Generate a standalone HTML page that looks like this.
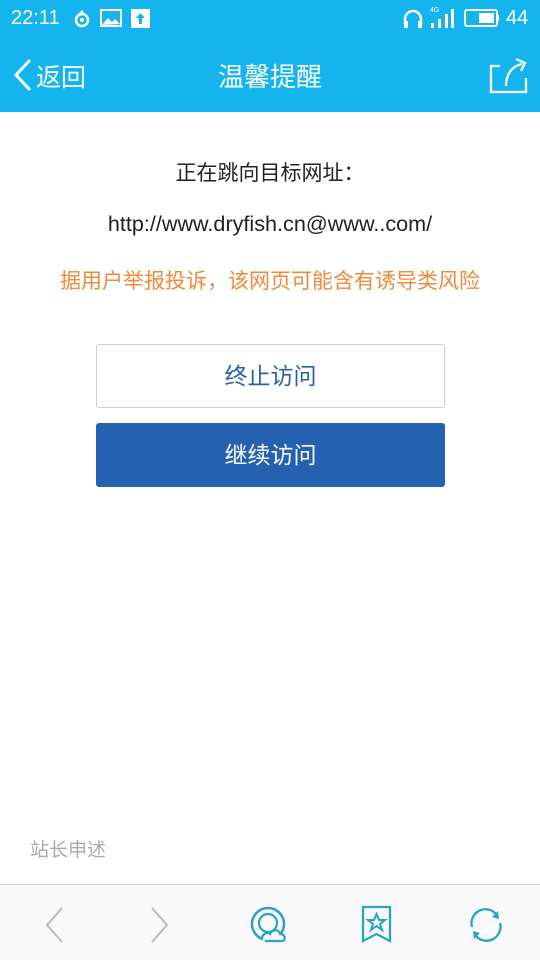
<!DOCTYPE html>
<html><head><meta charset="utf-8"><style>
*{margin:0;padding:0;box-sizing:border-box}
body{width:540px;height:960px;overflow:hidden;background:#fff;font-family:"Liberation Sans","Noto Sans CJK SC",sans-serif;position:relative}
.top{position:absolute;left:0;top:0;width:540px;height:112px;background:#14b4ee}
.abs{position:absolute}
.w{color:#fff}
.bottom{position:absolute;left:0;top:884px;width:540px;height:76px;background:#f9f9f9;border-top:1px solid #d0d0d0}
</style></head><body>
<div class="top">
 <div class="abs w" style="left:11px;top:7px;font-size:20px">22:11</div>
 <svg class="abs" style="left:72px;top:9px" width="20" height="20" viewBox="0 0 20 20"><circle cx="10" cy="11" r="6" fill="none" stroke="#fff" stroke-width="2.5"/><circle cx="10" cy="11" r="2" fill="#fff"/><path d="M6 7 L11 2" stroke="#fff" stroke-width="2.5"/></svg>
 <svg class="abs" style="left:100px;top:9px" width="22" height="18" viewBox="0 0 22 18"><rect x="1" y="1" width="20" height="16" fill="none" stroke="#fff" stroke-width="2"/><path d="M2 16 L8 9 L12 13 L15 10 L20 15 Z" fill="#fff"/></svg>
 <svg class="abs" style="left:131px;top:9px" width="19" height="19"><rect width="19" height="19" fill="#fff"/><path d="M9.5 4 L5 9 H8 V15 H11 V9 H14 Z" fill="#14b4ee"/></svg>
 <svg class="abs" style="left:402px;top:8px" width="22" height="22" viewBox="0 0 22 22"><path d="M3 16 V11 A8 8 0 0 1 19 11 V16" fill="none" stroke="#fff" stroke-width="2.5"/><rect x="2" y="13" width="4" height="7" fill="#fff"/><rect x="16" y="13" width="4" height="7" fill="#fff"/></svg>
 <div class="abs w" style="left:430px;top:7px;font-size:7px">4G</div>
 <svg class="abs" style="left:430px;top:9px" width="26" height="20"><rect x="1" y="14" width="3" height="5" fill="#fff"/><rect x="8" y="10" width="3" height="9" fill="#fff"/><rect x="15" y="5" width="3" height="14" fill="#fff"/><rect x="21" y="0" width="3" height="19" fill="#fff"/></svg>
 <svg class="abs" style="left:464px;top:9px" width="36" height="19"><rect x="1" y="1" width="32" height="16" rx="2" fill="none" stroke="#fff" stroke-width="2"/><rect x="15" y="4" width="15" height="10" fill="#fff"/><rect x="33" y="6" width="2" height="6" fill="#fff"/></svg>
 <div class="abs w" style="left:506px;top:7px;font-size:20px">44</div>
 <svg class="abs" style="left:12px;top:58px" width="22" height="34"><path d="M18 2 L4 17 L18 32" fill="none" stroke="#fff" stroke-width="3"/></svg>
 <div class="abs w" style="left:36px;top:58px;font-size:25px">返回</div>
 <div class="abs w" style="left:0;width:540px;text-align:center;top:57px;font-size:26px">温馨提醒</div>
 <svg class="abs" style="left:488px;top:56px" width="42" height="38"><path d="M12 10 H3 V36 H38 V22" fill="none" stroke="#fff" stroke-width="2.3"/><path d="M18 30 C18 18 24 10 34 8" fill="none" stroke="#fff" stroke-width="2.3"/><path d="M28 3 L37 7 L33 15" fill="none" stroke="#fff" stroke-width="2.3"/></svg>
</div>
<div class="abs" style="left:0;width:540px;text-align:center;top:157px;font-size:21px;color:#222">正在跳向目标网址：</div>
<div class="abs" style="left:0;width:540px;text-align:center;top:211px;font-size:21.6px;color:#222">http://www.dryfish.cn@www..com/</div>
<div class="abs" style="left:0;width:540px;text-align:center;top:265px;font-size:21px;color:#ef8a3c">据用户举报投诉，该网页可能含有诱导类风险</div>
<div class="abs" style="left:96px;top:344px;width:349px;height:64px;border:1px solid #ccc;border-radius:3px;text-align:center;line-height:62px;font-size:23px;color:#2a5fa6">终止访问</div>
<div class="abs" style="left:96px;top:423px;width:349px;height:64px;background:#2461b0;border-radius:3px;text-align:center;line-height:64px;font-size:23px;color:#fff">继续访问</div>
<div class="abs" style="left:30px;top:835px;font-size:19px;color:#aaa">站长申述</div>
<div class="bottom">
 <svg class="abs" style="left:42px;top:20px" width="24" height="40"><path d="M20 3 L5 20 L20 37" fill="none" stroke="#bbb" stroke-width="2"/></svg>
 <svg class="abs" style="left:148px;top:20px" width="24" height="40"><path d="M4 3 L19 20 L4 37" fill="none" stroke="#bbb" stroke-width="2"/></svg>
 <svg class="abs" style="left:248px;top:18px" width="44" height="44"><circle cx="20" cy="21" r="16" fill="none" stroke="#2aa3c0" stroke-width="2.5"/><circle cx="20" cy="20" r="9" fill="none" stroke="#2aa3c0" stroke-width="2.2"/><path d="M14 36 C14 30 20 29 22 31 C24 26 31 26 32 31 C37 31 38 36 35 38 H17" fill="#f9f9f9" stroke="#2aa3c0" stroke-width="2.2"/></svg>
 <svg class="abs" style="left:360px;top:20px" width="34" height="40"><path d="M3 2 H30 V36 L16.5 29 L3 36 Z" fill="none" stroke="#2aa3c0" stroke-width="2.3"/><path d="M16.5 9 L19 15 H25 L20 19 L22 25 L16.5 21 L11 25 L13 19 L8 15 H14 Z" fill="none" stroke="#2aa3c0" stroke-width="2"/></svg>
 <svg class="abs" style="left:466px;top:20px" width="40" height="40"><path d="M6 22 A14 14 0 0 1 30 9" fill="none" stroke="#2aa3c0" stroke-width="2.3"/><path d="M34 18 A14 14 0 0 1 10 31" fill="none" stroke="#2aa3c0" stroke-width="2.3"/><path d="M32 6 L33 14 L26 12Z" fill="#2aa3c0"/><path d="M8 34 L7 26 L14 28Z" fill="#2aa3c0"/></svg>
</div>
</body></html>
